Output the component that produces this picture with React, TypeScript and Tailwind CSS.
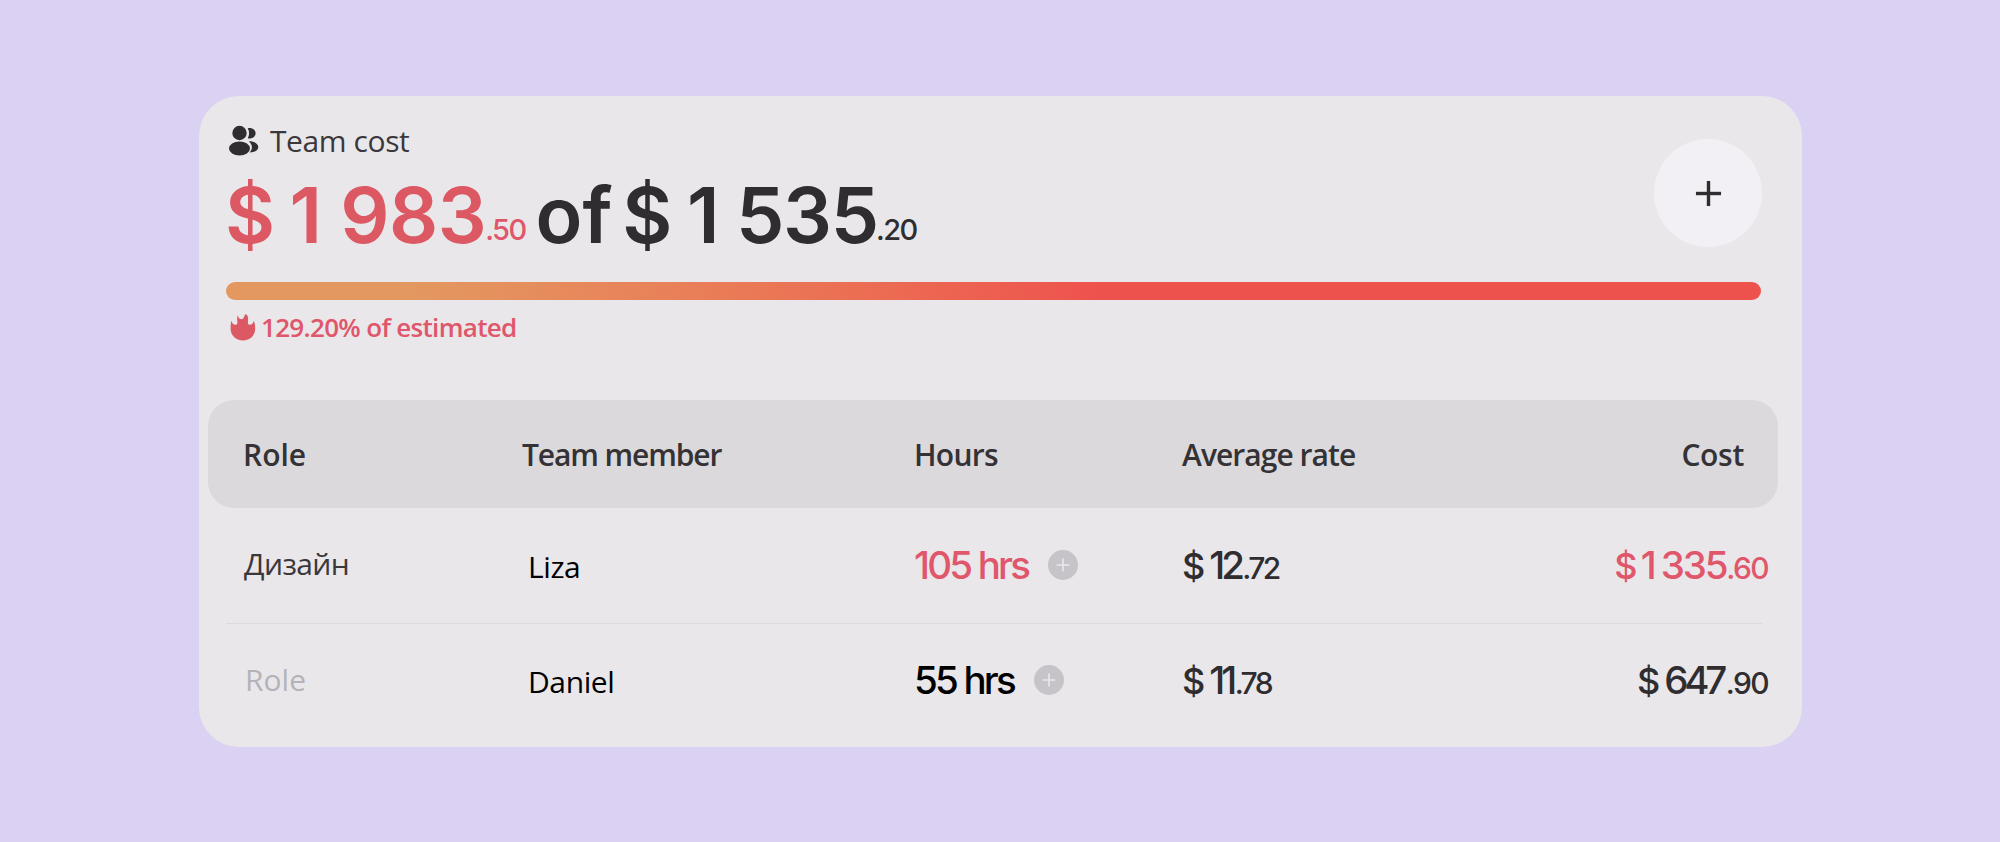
import { Plus } from 'lucide-react';

const members = [
  {
    role: 'Дизайн',
    roleClass: 'text-[#3a383b] font-medium tracking-[-0.6px] -translate-y-1',
    rowClass: 'pt-[37px]',
    name: 'Liza',
    hours: '105 hrs',
    hoursClass: 'text-[#e0566a]',
    rate: ['$', '12', '.72'],
    cost: ['$', '1', '335', '.60'],
    costClass: 'text-[#e0566a]',
    amountClass: 'tracking-[-2.2px]',
  },
  {
    role: 'Role',
    roleClass: 'text-[#b5b3b7] pl-px -translate-y-[3px]',
    rowClass: 'pt-9',
    name: 'Daniel',
    hours: '55 hrs',
    hoursClass: 'text-black',
    rate: ['$', '11', '.78'],
    cost: ['$', '', '647', '.90'],
    costClass: 'text-[#2f2d30]',
    amountClass: 'tracking-[-4.2px] mr-[2.6px]',
  },
];

function PeopleIcon() {
  return (
    <svg className="translate-x-px translate-y-px" width="32" height="32" viewBox="0 0 32 32" fill="#2f2d30">
      <circle cx="11.500" cy="8" r="7.200" />
      <ellipse cx="11.500" cy="23.500" rx="10.500" ry="7" />
      <path d="M19.700 3.300c4-1 7.900 1.300 7.900 4.900s-3.900 6.100-7.900 5c1.900-3.100 1.900-6.800 0-9.900z" />
      <path d="M20.800 16.300c5.400 0 9.500 2.300 9.500 5.600s-3.900 5.600-8.700 5.600c3.300-3.500 3.100-7.800-.8-11.200z" />
    </svg>
  );
}

function FlameIcon() {
  return (
    <svg width="26" height="28" viewBox="0 0 26 28" fill="#dc5862">
      <path d="M13 27.500C5.800 27.500.6 22.300.6 15.500c0-3.200.2-5.600.8-8 .7 2.900 1.800 4.300 4.100 4.300 1.900 0 2.100-1.600 1.800-3.700-.3-2.300-.2-4.100.6-5.900.5 2.600 1.600 4 3.600 4 2.700 0 2.100-3.200 4.300-5.200 2.400 1.600 2.600 4 2.200 6.700-.3 2.300-.2 4.100 1.700 4.100 2.300 0 3.400-1.600 4.200-4 .9 2.300 1.300 4.900 1.300 7.700 0 7-5 12-12.200 12z" />
    </svg>
  );
}

export default function App() {
  return (
    <div className="flex h-[842px] w-[2000px] flex-col bg-[#dbd2f3] pt-24 pl-[199px] font-['Open_Sans',sans-serif]">
      <div className="h-[651px] w-[1603px] shrink-0 rounded-[40px] bg-[#e9e7ea]">
        <div className="flex h-[186px] justify-between pr-10 pl-[27px]">
          <div className="pt-[26px]">
            <div className="flex h-9 items-center gap-[11px] pl-px">
              <PeopleIcon />
              <span className="text-[30px] font-medium tracking-[-0.4px] text-[#3a383b]">Team cost</span>
            </div>
            <div className="-ml-px flex h-[90px] items-baseline font-['Inter',sans-serif] text-[77px] font-semibold tracking-[-0.5px] whitespace-nowrap text-[#2f2d30]">
              <span className="text-[#dc5862]">$</span>
              <span className="ml-[15px] text-[#dc5862]">1</span>
              <span className="ml-[18.5px] text-[#dc5862]">983</span>
              <span className="-ml-px -translate-y-[3px] text-[29px] font-medium tracking-[-1.6px] text-[#e0566a]">.50</span>
              <span className="ml-2.5 tracking-normal">of</span>
              <span className="ml-2.5">$</span>
              <span className="ml-[15px]">1</span>
              <span className="ml-[17px] tracking-[-1.3px]">535</span>
              <span className="-ml-0.5 -translate-y-[3px] text-[29px] font-medium tracking-[-1.5px]">.20</span>
            </div>
          </div>
          <button className="mt-[43px] flex size-[108px] items-center justify-center rounded-full bg-[#f2f0f4]">
            <Plus size={43} strokeWidth={1.9} strokeLinecap="butt" color="#2f2d30" />
          </button>
        </div>

        <div className="mr-[41px] ml-[27px] h-[18px] rounded-full bg-linear-to-r from-[#e39860] from-12% to-[#ee524d] to-57%" />
        <div className="ml-[31px] flex h-[100px] gap-[5px] pt-[13px]">
          <FlameIcon />
          <span className="text-[26px] leading-7 font-semibold tracking-[-0.68px] text-[#e0566a]">129.20% of estimated</span>
        </div>

        <div className="mr-6 ml-[9px] grid h-[108px] grid-cols-[279px_392px_268px_1fr] items-center rounded-[26px] bg-[#dbd9dc] pr-[34px] pl-[35px] text-[30px] font-semibold text-[#343235]">
          <span>Role</span>
          <span className="tracking-[-1.1px]">Team member</span>
          <span className="tracking-[-0.7px]">Hours</span>
          <span className="flex justify-between">
            <span className="tracking-[-0.95px]">Average rate</span>
            <span className="tracking-[-0.3px]">Cost</span>
          </span>
        </div>

        {members.map((m, i) => (
          <div key={m.name}>
            {i > 0 && <div className="mr-10 ml-[27px] h-px bg-[#dcdadd]" />}
            <div className={`mr-[34px] ml-[45px] grid h-[115px] grid-cols-[284px_386px_268px_1fr] items-baseline text-[30px] leading-10 whitespace-nowrap ${m.rowClass}`}>
              <span className={m.roleClass}>{m.role}</span>
              <span className="-translate-y-px font-medium tracking-[-0.4px] text-black">{m.name}</span>
              <span className="flex items-baseline gap-5 font-['Inter',sans-serif]">
                <span className={`text-[38.5px] font-medium tracking-[-2.8px] ${m.hoursClass}`}>{m.hours}</span>
                <span className="flex size-[30px] items-center justify-center self-center rounded-full bg-[#c6c4c8]">
                  <Plus size={20} strokeWidth={2} color="#e9e7ea" />
                </span>
              </span>
              <span className="flex items-baseline justify-between font-['Inter',sans-serif]">
                <span className="flex items-baseline text-[38.5px] font-medium text-[#2f2d30]">
                  <span className="text-[36px]">{m.rate[0]}</span>
                  <span className="ml-1 tracking-[-4px]">{m.rate[1]}</span>
                  <span className="ml-[1.4px] text-[30px] tracking-[-2.6px]">{m.rate[2]}</span>
                </span>
                <span className={`flex items-baseline text-[38.5px] font-medium ${m.costClass}`}>
                  <span className="text-[36px]">{m.cost[0]}</span>
                  {m.cost[1] && <span className="ml-[3.3px]">{m.cost[1]}</span>}
                  <span className={`ml-1 ${m.amountClass}`}>{m.cost[2]}</span>
                  <span className="text-[30px] tracking-[-1.6px]">{m.cost[3]}</span>
                </span>
              </span>
            </div>
          </div>
        ))}
      </div>
    </div>
  );
}
